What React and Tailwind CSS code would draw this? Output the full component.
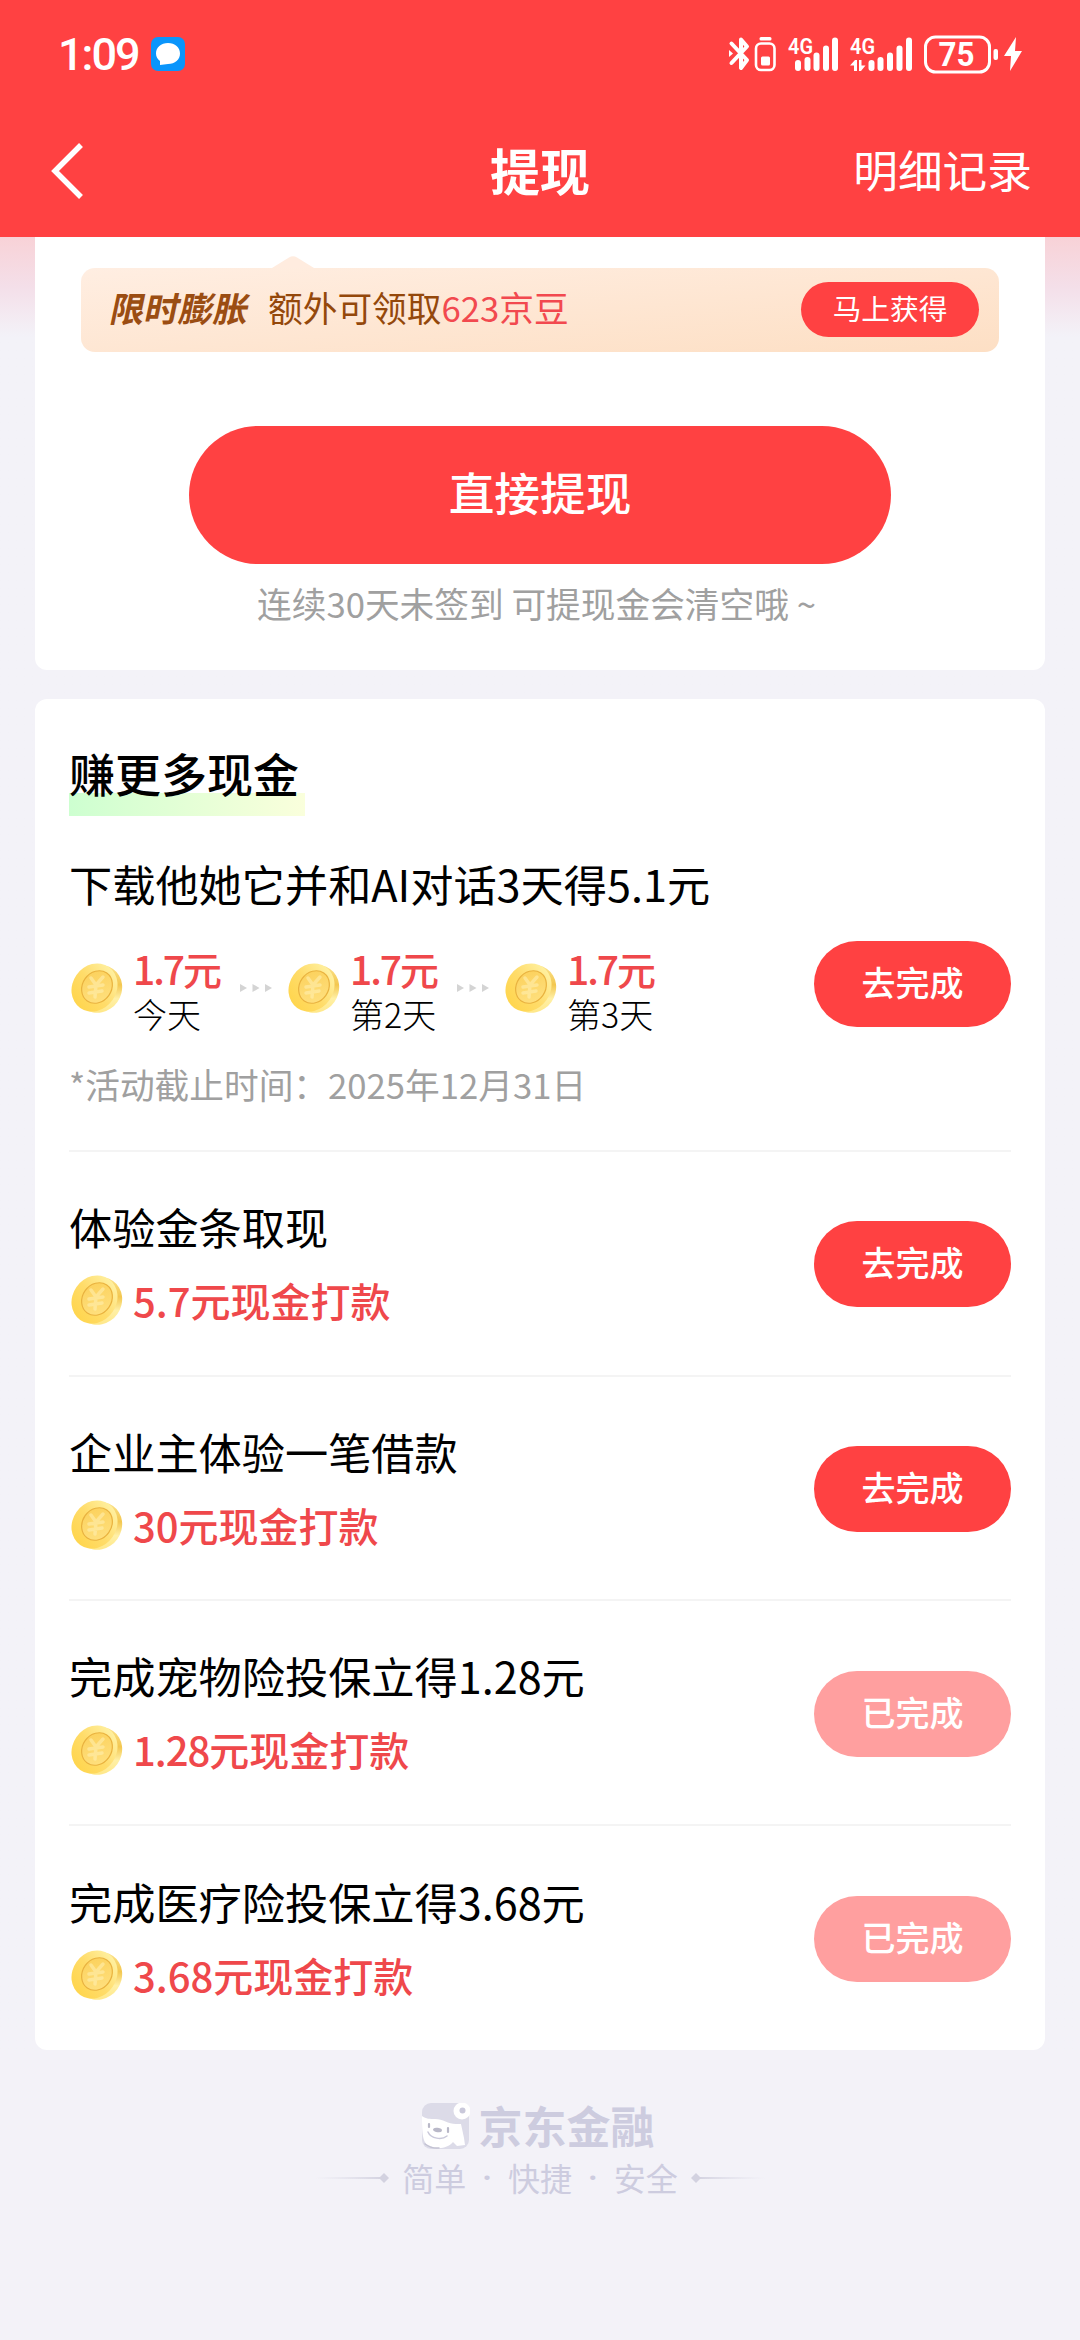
import React from 'react';

const steps = [
  { amount: '1.7', day: '今天' },
  { amount: '1.7', day: '第2天' },
  { amount: '1.7', day: '第3天' },
];

const tasks = [
  { title: '体验金条取现', reward: '5.7', done: false },
  { title: '企业主体验一笔借款', reward: '30', done: false },
  { title: '完成宠物险投保立得1.28元', reward: '1.28', done: true },
  { title: '完成医疗险投保立得3.68元', reward: '3.68', done: true },
];

function Coin() {
  return (
    <svg viewBox="0 0 54 54" className="h-[54px] w-[54px] shrink-0">
      <defs>
        <linearGradient id="coinEdge" x1="0" y1="0" x2="0.6" y2="1">
          <stop offset="0" stopColor="#ffefa8" />
          <stop offset="0.5" stopColor="#f3c750" />
          <stop offset="0.75" stopColor="#fff0a6" />
          <stop offset="1" stopColor="#ffe88a" />
        </linearGradient>
        <linearGradient id="coinFace" x1="0.6" y1="0" x2="0.3" y2="1">
          <stop offset="0" stopColor="#fff0a0" />
          <stop offset="0.5" stopColor="#ffdc6a" />
          <stop offset="1" stopColor="#ffd54c" />
        </linearGradient>
        <linearGradient id="coinInner" x1="0" y1="0" x2="1" y2="1">
          <stop offset="0" stopColor="#fbcf58" />
          <stop offset="1" stopColor="#ffe283" />
        </linearGradient>
      </defs>
      <ellipse cx="30" cy="28" rx="22.500" ry="24.500" transform="rotate(35 30 28)" fill="url(#coinEdge)" />
      <ellipse cx="25.500" cy="26.500" rx="22" ry="25" transform="rotate(35 25.500 26.500)" fill="url(#coinFace)" />
      <ellipse cx="28" cy="26" rx="14.500" ry="17" transform="rotate(35 28 26)" fill="url(#coinInner)" stroke="#e9b23f" strokeWidth="1.2" />
      <path d="M22 17l5 7 7-8M27 24l-1 12M20 26l14-2M20 32l13-2" fill="none" stroke="#fff0b4" strokeWidth="3.500" strokeLinecap="round" opacity="0.55" />
    </svg>
  );
}

function StatusIcons() {
  return (
    <svg viewBox="0 0 296 40" className="h-10 w-[296px]" fill="#fff">
      <path d="M3.500 9.500L19 26l-6 8V5.500l6 7L3.500 29" fill="none" stroke="#fff" strokeWidth="4" strokeLinejoin="round" strokeLinecap="round" />
      <path d="M1 16l4 3.500L1 23z" />
      <rect x="31.500" y="3" width="12" height="3.500" rx="1.500" />
      <rect x="28" y="9.500" width="18.500" height="26.500" rx="5" fill="none" stroke="#fff" strokeWidth="2.600" />
      <rect x="33" y="22.500" width="9" height="9" rx="1.500" />
      <text x="60" y="19.500" fontSize="22" fontWeight="600" fontFamily="Roboto, sans-serif" textLength="25" lengthAdjust="spacingAndGlyphs">4G</text>
      <rect x="67" y="26" width="6" height="11" rx="3" />
      <rect x="76.500" y="23" width="6" height="14" rx="3" />
      <rect x="85.500" y="18.500" width="6" height="18.500" rx="3" />
      <rect x="95" y="11.500" width="6" height="25.500" rx="3" />
      <rect x="104" y="3.500" width="6" height="33.500" rx="3" />
      <text x="122" y="19.500" fontSize="22" fontWeight="600" fontFamily="Roboto, sans-serif" textLength="25" lengthAdjust="spacingAndGlyphs">4G</text>
      <path d="M122 31.500l5-5.500h2v11h-3v-5.500zM131 26h2.500v5.500h4L133 37h-2z" />
      <rect x="140.500" y="26" width="6" height="11" rx="3" />
      <rect x="149.500" y="23" width="6" height="14" rx="3" />
      <rect x="159" y="18.500" width="6" height="18.500" rx="3" />
      <rect x="168.500" y="11.500" width="6" height="25.500" rx="3" />
      <rect x="178" y="3.500" width="6" height="33.500" rx="3" />
      <rect x="197.500" y="3" width="64" height="35" rx="10" fill="none" stroke="#fff" strokeWidth="3" />
      <text x="210.500" y="32" fontSize="33" fontWeight="700" fontFamily="Roboto, sans-serif" textLength="36" lengthAdjust="spacingAndGlyphs">75</text>
      <rect x="265.500" y="15" width="4.500" height="11" rx="2" />
      <path d="M288 3l-12 19h7l-1 15 12-20h-7z" />
    </svg>
  );
}

function StepArrows() {
  return (
    <svg viewBox="0 0 34 10" className="h-[10px] w-[34px] shrink-0" fill="#d4d4d4">
      <path d="M1 1l7 4-7 4zM13.500 1l7 4-7 4zM26 1l7 4-7 4z" />
    </svg>
  );
}

function TaskButton({ done }) {
  return (
    <button
      className={`flex h-[86px] w-[197px] shrink-0 items-center justify-center rounded-full pb-1 text-[34px] leading-none font-medium text-white ${done ? 'bg-[#ff9f9f]' : 'bg-[#ff4142]'}`}
    >
      {done ? '已完成' : '去完成'}
    </button>
  );
}

function BrandLogo() {
  return (
    <svg viewBox="0 0 48 46" className="h-[46px] w-[48px]">
      <rect width="47" height="46" rx="9" fill="#dcdbe8" />
      <path d="M0 13c4 3 8 3 13 3 8 0 13 5 21 5l5 0 3 14 1 7-8 1-4-4c-6 7-17 8-25 3C1 39 0 32 0 13z" fill="#fff" />
      <path d="M3 41c4 3 9 4.500 14 4" fill="none" stroke="#c3c2d2" strokeWidth="1.500" strokeLinecap="round" />
      <circle cx="40" cy="8" r="8.500" fill="#fff" />
      <circle cx="40.500" cy="7.500" r="3" fill="#c9c8da" />
      <ellipse cx="15.500" cy="27" rx="4.500" ry="2.200" transform="rotate(8 15.500 27)" fill="#b9b8c8" />
      <path d="M7 21v3M26 25v4" stroke="#b9b8c8" strokeWidth="2.200" strokeLinecap="round" />
      <path d="M6 29c3 7 14 8 19 4" fill="none" stroke="#c9c8da" strokeWidth="1.500" strokeLinecap="round" />
    </svg>
  );
}

export default function App() {
  return (
    <div className="flex h-[2340px] w-[1080px] flex-col overflow-hidden bg-[#f3f2f8] font-['Noto_Sans_CJK_SC',sans-serif] text-black">
      {/* Header */}
      <header className="h-[237px] shrink-0 bg-[#ff4142] text-white">
        <div className="flex h-[108px] items-center justify-between pr-[56px] pl-[58px]">
          <div className="flex items-center gap-3">
            <span className="w-[81px] font-[Roboto] text-[45px] leading-none font-medium tracking-[-2px]">1:09</span>
            <svg viewBox="0 0 34 34" className="h-[34px] w-[34px]">
              <rect width="34" height="34" rx="7" fill="#0a95fb" />
              <path d="M17 6c7 0 12 4.500 12 10.500S24 27 17 27l-8 1v-4c-2.500-2-4-4.500-4-7.500C5 10.500 10 6 17 6z" fill="#fff" />
            </svg>
          </div>
          <StatusIcons />
        </div>
        <div className="flex h-[129px] items-center justify-between pr-[48px] pb-[7px] pl-[49px]">
          <svg viewBox="0 0 34 56" className="mt-[4px] h-14 w-[178px]" preserveAspectRatio="xMinYMid" fill="none" stroke="#fff" strokeWidth="5.500">
            <path d="M32 2L6 28l26 26" />
          </svg>
          <h1 className="text-[50px] leading-none font-bold">提现</h1>
          <span className="text-[44.700px] leading-none">明细记录</span>
        </div>
      </header>

      <main className="bg-linear-to-b from-[#f8d2d7] via-[#f4dfe9] via-[50px] to-[#f3f2f8] to-[100px] px-[35px]">
        {/* Withdraw card */}
        <section className="flex h-[433px] flex-col items-center rounded-b-[12px] bg-white pt-[19px]">
          <div className="flex w-full flex-col px-[46px]">
            <svg viewBox="0 0 42 12" className="ml-[191px] h-3 w-[42px]">
              <path d="M0 12L17 1.500q4-2.500 8 0L42 12z" fill="#ffecdf" />
            </svg>
            <div className="flex h-[84px] items-center rounded-[14px] bg-linear-to-br from-[#ffeee2] to-[#fddfc4] pr-[20px] pl-[30px]">
              <span className="w-[138px] -skew-x-12 pb-[5px] text-[34.500px] leading-none font-bold text-[#9b4d12]">限时膨胀</span>
              <span className="ml-[19px] flex-1 pb-[6px] text-[34.700px] leading-none text-[#94480b]">
                额外可领取<span className="text-[#f2494f]">623京豆</span>
              </span>
              <button className="mb-[1px] h-[55px] w-[178px] rounded-full bg-[#ff4142] pb-[3px] text-[28.700px] leading-none text-white">马上获得</button>
            </div>
          </div>
          <button className="mt-[74px] h-[138px] w-[702px] rounded-full bg-[#ff4142] pb-[6px] text-[45.700px] leading-none font-medium text-white">直接提现</button>
          <p className="mt-[22px] pr-[7px] text-[34.700px] leading-none text-[#a0a0a0]">连续30天未签到 可提现金会清空哦 ~</p>
        </section>

        {/* Task list */}
        <section className="mt-[29px] h-[1351px] rounded-[12px] bg-white px-[34px] pt-[50px]">
          <h2 className="flex h-[67px] w-[236px] items-start bg-linear-to-r from-[#cdffd0] to-[#faffdc] bg-[length:100%_23px] bg-bottom bg-no-repeat text-[46px] leading-none font-medium">赚更多现金</h2>
          <div className="flex h-[336px] flex-col border-b-2 border-[#f4f4f4] pt-[46px]">
            <h3 className="text-[43.200px] leading-none">下载他她它并和AI对话3天得5.1元</h3>
            <div className="mt-[33px] flex h-[92px] items-center justify-between">
              <div className="flex items-center pt-[8px]">
                {steps.map((step, i) => (
                  <div key={i} className="flex w-[217px] items-center">
                    <Coin />
                    <div className="ml-[10px] w-[92px] pt-[5px] whitespace-nowrap">
                      <div className="text-[39px] leading-[46px] font-medium text-[#ef484b]">
                        <span className="tracking-[-2px]">{step.amount}</span>元
                      </div>
                      <div className="text-[34px] leading-[46px] font-light">{step.day}</div>
                    </div>
                    {i < 2 && <span className="ml-[14px]"><StepArrows /></span>}
                  </div>
                ))}
              </div>
              <TaskButton />
            </div>
            <p className="mt-[37px] text-[34.700px] leading-none text-[#a0a0a0]">*活动截止时间：2025年12月31日</p>
          </div>
          {tasks.map((task, i) => (
            <div key={task.title} className={`flex h-[224.700px] items-center justify-between ${i < 3 ? 'border-b-2 border-[#f4f4f4]' : ''}`}>
              <div>
                <h3 className="pt-[2px] text-[43.200px] leading-[58px]">{task.title}</h3>
                <div className="mt-[14px] flex items-center gap-[10px]">
                  <Coin />
                  <span className="pb-[1px] text-[40px] leading-[62px] font-medium text-[#ef484b]">
                    <span className={task.reward.startsWith('1') ? 'tracking-[-1px]' : ''}>{task.reward}</span>元现金打款
                  </span>
                </div>
              </div>
              <div className="pt-[2px]">
                <TaskButton done={task.done} />
              </div>
            </div>
          ))}
        </section>
      </main>

      <footer className="mt-[53px] flex flex-col items-center text-[#cdccdf]">
        <div className="flex items-center gap-[9px] pr-[4px]">
          <BrandLogo />
          <span className="pb-[2px] text-[44px] leading-[44px] font-bold">京东金融</span>
        </div>
        <div className="mt-[12px] flex items-center gap-[13px]">
          <svg viewBox="0 0 74 10" className="h-[10px] w-[74px]">
            <defs>
              <linearGradient id="lineFade">
                <stop offset="0" stopColor="#dddce8" stopOpacity="0" />
                <stop offset="1" stopColor="#d3d2e0" />
              </linearGradient>
            </defs>
            <rect y="4" width="68" height="2" fill="url(#lineFade)" />
            <path d="M69 0l5 5-5 5-5-5z" fill="#d3d2e0" />
          </svg>
          <div className="flex items-center gap-[16px] pb-[2px] text-[32px] leading-[32px]">
            <span>简单</span>
            <span className="font-[Roboto] text-[32px] font-bold">·</span>
            <span>快捷</span>
            <span className="font-[Roboto] text-[32px] font-bold">·</span>
            <span>安全</span>
          </div>
          <svg viewBox="0 0 74 10" className="h-[10px] w-[74px] -scale-x-100">
            <rect y="4" width="68" height="2" fill="url(#lineFade)" />
            <path d="M69 0l5 5-5 5-5-5z" fill="#d3d2e0" />
          </svg>
        </div>
      </footer>
    </div>
  );
}
